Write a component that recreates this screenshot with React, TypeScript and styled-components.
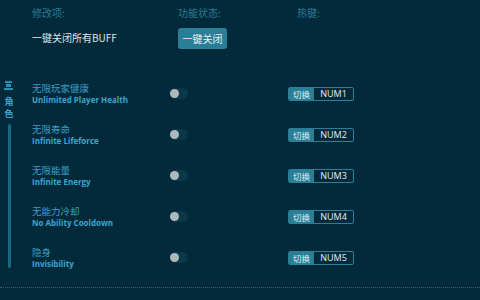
import React from 'react';
import styled, { createGlobalStyle } from 'styled-components';

const GlobalStyle = createGlobalStyle`
  html, body {
    margin: 0;
    padding: 0;
    background: #032a3a;
  }
  body {
    font-family: "Noto Sans CJK SC", "Noto Sans", sans-serif;
  }
`;

const Page = styled.div`
  width: 480px;
  height: 300px;
  background: #032a3a;
  display: flex;
  flex-direction: column;
  overflow: hidden;
`;

const TopRow = styled.div<{ $height: number }>`
  display: grid;
  grid-template-columns: 146px 119px 1fr;
  align-items: center;
  padding-left: 32px;
  height: ${(p) => p.$height}px;
`;

const HeadLabel = styled.span`
  font-size: 10px;
  line-height: 12px;
  color: #2b7a94;
`;

const BuffLabel = styled.span`
  font-size: 10px;
  line-height: 12px;
  color: #dbe6ea;
`;

const CloseButton = styled.button`
  justify-self: start;
  width: 49px;
  height: 21px;
  padding: 0;
  border: none;
  border-radius: 3px;
  background: #2a7e95;
  color: #eaf3f6;
  font-family: inherit;
  font-size: 10px;
`;

const Body = styled.div`
  display: flex;
  margin-top: 29px;
  padding-top: 2px;
  height: 206px;
`;

const Sidebar = styled.div`
  width: 32px;
  display: flex;
  flex-direction: column;
  align-items: flex-start;
  padding-left: 4px;
  box-sizing: border-box;
`;

const SideIcon = styled.svg`
  width: 9px;
  height: 9px;
  margin-bottom: 6px;
`;

const SideText = styled.span`
  font-size: 9px;
  line-height: 12px;
  font-weight: bold;
  color: #3aa6cc;
  width: 10px;
  text-align: center;
`;

const SideBar = styled.div`
  width: 3px;
  height: 144px;
  margin-top: 4px;
  margin-left: 4px;
  border-radius: 2px;
  background: #1c6883;
`;

const List = styled.div`
  display: flex;
  flex-direction: column;
  padding-top: 1px;
`;

const Row = styled.div`
  display: grid;
  grid-template-columns: 138px 118px auto;
  align-items: center;
  align-content: start;
  height: 41px;
`;

const Names = styled.div`
  display: flex;
  flex-direction: column;
`;

const CnName = styled.span`
  font-size: 9.5px;
  line-height: 12px;
  color: #3a9fc6;
`;

const EnName = styled.span`
  font-family: "Open Sans", "Noto Sans", sans-serif;
  font-size: 8px;
  line-height: 11px;
  font-weight: bold;
  color: #3aa6d0;
`;

const Toggle = styled.div`
  width: 18px;
  height: 11px;
  border-radius: 6px;
  background: #0b3848;
  position: relative;

  &::after {
    content: '';
    position: absolute;
    left: 0;
    top: 1px;
    width: 9px;
    height: 9px;
    border-radius: 50%;
    background: #aeb9bd;
  }
`;

const Hotkey = styled.div`
  display: flex;
  height: 14px;
  width: 66px;
  border: 1px solid #2a7e95;
  border-radius: 2px;
  box-sizing: border-box;
  overflow: hidden;
`;

const KeyTag = styled.span`
  width: 25px;
  background: #2a7e95;
  color: #dfeef2;
  font-size: 8.5px;
  line-height: 12px;
  text-align: center;
`;

const KeyName = styled.span`
  flex: 1;
  color: #e6eef0;
  font-family: "Open Sans", "Noto Sans", sans-serif;
  font-size: 9px;
  line-height: 12px;
  text-align: center;
`;

const Footer = styled.div`
  margin-top: auto;
  margin-bottom: 12px;
  border-top: 1px dotted #2f6070;
`;

const cheats = [
  { cn: '无限玩家健康', en: 'Unlimited Player Health', key: 'NUM1' },
  { cn: '无限寿命', en: 'Infinite Lifeforce', key: 'NUM2' },
  { cn: '无限能量', en: 'Infinite Energy', key: 'NUM3' },
  { cn: '无能力冷却', en: 'No Ability Cooldown', key: 'NUM4' },
  { cn: '隐身', en: 'Invisibility', key: 'NUM5' },
];

const App: React.FC = () => {
  return (
    <Page>
      <GlobalStyle />
      <TopRow $height={27}>
        <HeadLabel>修改项:</HeadLabel>
        <HeadLabel>功能状态:</HeadLabel>
        <HeadLabel>热键:</HeadLabel>
      </TopRow>
      <TopRow $height={24}>
        <BuffLabel>一键关闭所有BUFF</BuffLabel>
        <CloseButton>一键关闭</CloseButton>
      </TopRow>
      <Body>
        <Sidebar>
          <SideIcon viewBox="0 0 9 9">
            <rect x="1" y="0" width="7" height="2" fill="#2a8fb0" />
            <rect x="2" y="3" width="5" height="3" fill="#2a8fb0" />
            <rect x="0" y="7" width="9" height="2" fill="#2a8fb0" />
          </SideIcon>
          <SideText>角</SideText>
          <SideText>色</SideText>
          <SideBar />
        </Sidebar>
        <List>
          {cheats.map((c) => (
            <Row key={c.key}>
              <Names>
                <CnName>{c.cn}</CnName>
                <EnName>{c.en}</EnName>
              </Names>
              <Toggle />
              <Hotkey>
                <KeyTag>切换</KeyTag>
                <KeyName>{c.key}</KeyName>
              </Hotkey>
            </Row>
          ))}
        </List>
      </Body>
      <Footer />
    </Page>
  );
};

export default App;
